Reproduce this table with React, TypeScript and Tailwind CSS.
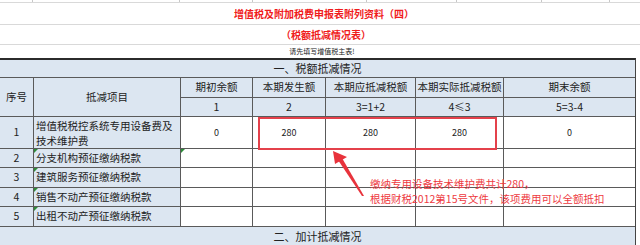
import React from 'react';

const font = { fontFamily: '"Noto Sans CJK SC", "Noto Sans", sans-serif' };

// the sheet's column marks along the very top edge
const topTicks = [33, 147, 73, 114, 90, 85, 68];

const items = [
  { no: '2', name: '分支机构预征缴纳税款', h: 'h-[18px]' },
  { no: '3', name: '建筑服务预征缴纳税款', h: 'h-[19px]' },
  { no: '4', name: '销售不动产预征缴纳税款', h: 'h-[18px]' },
  { no: '5', name: '出租不动产预征缴纳税款', h: 'h-[19px]' },
];

function Mark() {
  return (
    <span className="absolute left-0 top-0 w-0 h-0 border-t-[4px] border-t-[#2e8b3a] border-r-[4px] border-r-transparent" />
  );
}

export default function App() {
  const blue = 'bg-[#dce6f1]';

  return (
    <div className="relative w-[640px] h-[245px] overflow-hidden bg-white text-[#222]" style={font}>
      {/* top strip */}
      <div className="flex h-[3px] border-b border-[#d9d9d9]">
        {topTicks.map((w, i) => (
          <div key={i} className="h-full border-r border-[#c8c8c8]" style={{ width: w }} />
        ))}
      </div>

      {/* titles */}
      <div className="h-[22px] border-b border-[#d9d9d9] flex items-center justify-center">
        <span className="text-[10px] font-bold text-[#f01c1c] pl-[8px] leading-none">
          增值税及附加税费申报表附列资料（四）
        </span>
      </div>
      <div className="h-[20px] border-b border-[#d9d9d9] flex items-center justify-center">
        <span className="text-[10px] font-bold text-[#f01c1c] pl-[12px] leading-none">
          （税额抵减情况表）
        </span>
      </div>
      <div className="h-[13px] flex items-center justify-center">
        <span className="text-[7px] leading-none pl-[4px]">请先填写增值税主表!</span>
      </div>

      {/* table */}
      <div className="w-[636px] border-t-2 border-t-[#2b2b2b] border-r border-r-[#444] bg-[#5a5a5a] grid gap-px grid-cols-[33px_146px_71px_72px_89px_87px_131px] grid-rows-[17px_19px_18px_31px_18px_19px_18px_19px_18px] text-[10.5px] leading-none">
        <div className={`col-span-7 ${blue} flex items-center justify-center text-[11px]`}>
          一、税额抵减情况
        </div>

        <div className={`row-span-2 ${blue} flex items-center justify-center`}>序号</div>
        <div className={`row-span-2 ${blue} flex items-center justify-center`}>抵减项目</div>
        <div className={`${blue} flex items-center justify-center`}>期初余额</div>
        <div className={`${blue} flex items-center justify-center`}>本期发生额</div>
        <div className={`${blue} flex items-center justify-center`}>本期应抵减税额</div>
        <div className={`${blue} flex items-center justify-center`}>本期实际抵减税额</div>
        <div className={`${blue} flex items-center justify-center`}>期末余额</div>

        <div className={`${blue} flex items-center justify-center`}>1</div>
        <div className={`${blue} flex items-center justify-center`}>2</div>
        <div className={`${blue} flex items-center justify-center`}>3=1+2</div>
        <div className={`${blue} flex items-center justify-center`}>4≤3</div>
        <div className={`${blue} flex items-center justify-center`}>5=3-4</div>

        {/* row 1 */}
        <div className={`${blue} flex items-center justify-center`}>1</div>
        <div className={`${blue} flex items-center pl-[2px] leading-[15px]`}>
          增值税税控系统专用设备费及
          <br />
          技术维护费
        </div>
        <div className="bg-white flex items-center justify-center text-[9px]">0</div>
        <div className="bg-white flex items-center justify-center text-[9px]">280</div>
        <div className="bg-white flex items-center justify-center text-[9px]">280</div>
        <div className="bg-white flex items-center justify-center text-[9px]">280</div>
        <div className="bg-white flex items-center justify-center text-[9px]">0</div>

        {items.map((it, i) => (
          <React.Fragment key={it.no}>
            <div className={`${blue} flex items-center justify-center`}>{it.no}</div>
            <div className={`${blue} relative flex items-center pl-[2px]`}>
              <Mark />
              {it.name}
            </div>
            <div className="bg-white relative">{i === 0 && <Mark />}</div>
            <div className="bg-white" />
            <div className="bg-white" />
            <div className="bg-white" />
            <div className="bg-white" />
          </React.Fragment>
        ))}

        <div className={`col-span-7 ${blue} flex items-center justify-center text-[11px]`}>
          二、加计抵减情况
        </div>
      </div>

      {/* red highlight box */}
      <div className="absolute left-[258px] top-[117px] w-[239px] h-[33px] border-2 border-[#e4414b]" />

      {/* arrow */}
      <svg className="absolute left-0 top-0" width="640" height="245" viewBox="0 0 640 245">
        <polygon points="333,151 335,164 347,157" fill="#e8333c" />
        <polygon points="338,160 342,158 364,196 362,196" fill="#e8333c" />
      </svg>

      {/* annotation */}
      <div className="absolute left-[370px] top-[176px] text-[10.5px] leading-[15px] text-[#ee3a3f] whitespace-nowrap">
        缴纳专用设备技术维护费共计280，
        <br />
        根据财税2012第15号文件，该项费用可以全额抵扣
      </div>
    </div>
  );
}
